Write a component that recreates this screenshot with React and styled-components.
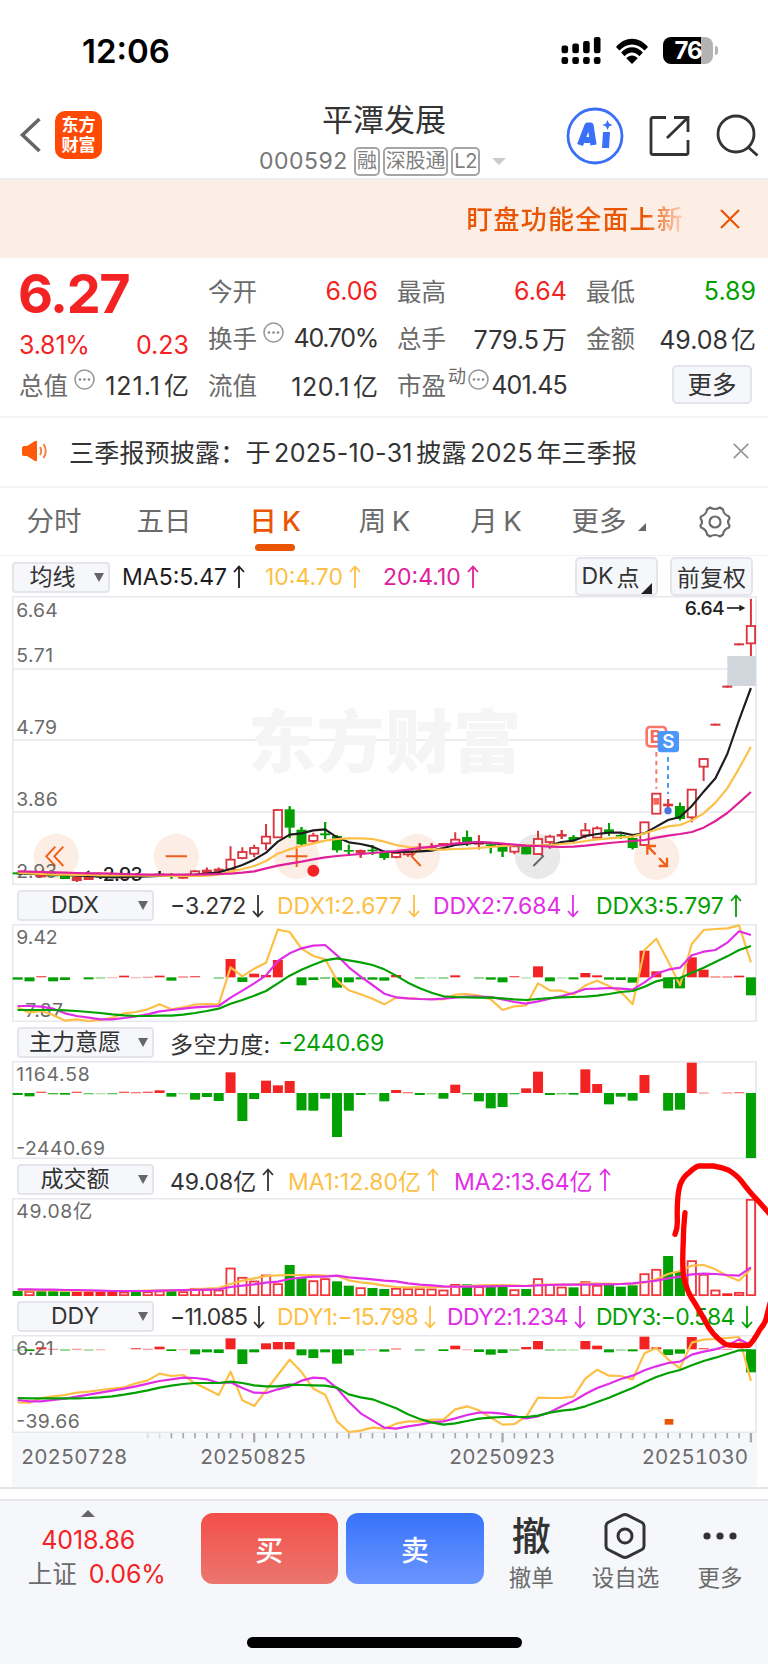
import React from "react";
import styled, { createGlobalStyle } from "styled-components";

const RED = "#f32323";
const GREEN = "#02a002";
const CANDLE = "#d9363e";
const YELLOW = "#fdbf45";
const PURPLE = "#e02ee6";
const PINK = "#e0209a";
const ORANGE = "#ea5504";

const GlobalStyle = createGlobalStyle`
  * {
    box-sizing: border-box;
  }

  body {
    margin: 0;
    background: #fff;
    font-family: Inter, "Noto Sans CJK SC", sans-serif;
    color: #333;
  }

  svg {
    display: block;
    flex-shrink: 0;
  }
`;

const Page = styled.div`
  position: relative;
  width: 768px;
  height: 1664px;
  display: flex;
  flex-direction: column;
  overflow: hidden;
  background: #fff;
  white-space: nowrap;
`;

const StatusBar = styled.div`
  height: 95px;
  padding: 31px 55px 0 82px;
  display: flex;
  align-items: flex-start;
  justify-content: space-between;
  color: #000;
`;

const Clock = styled.div`
  font-size: 33px;
  font-weight: 600;
  line-height: 41px;
  letter-spacing: 0;
`;

const StatusIcons = styled.div`
  display: flex;
  align-items: center;
  gap: 14px;
  padding-top: 6px;
`;

const Battery = styled.div`
  position: relative;
  width: 50px;
  height: 27px;
  border-radius: 8px;
  background: linear-gradient(to right, #000 76%, #b3b3b3 76%);
  color: #fff;
  font-size: 24px;
  font-weight: 700;
  line-height: 28px;
  text-align: center;
  letter-spacing: -1px;

  &::after {
    content: "";
    position: absolute;
    right: -5px;
    top: 9px;
    width: 3px;
    height: 9px;
    border-radius: 0 3px 3px 0;
    background: #b3b3b3;
  }
`;

const Header = styled.header`
  height: 85px;
  padding: 0 9px 0 19px;
  display: grid;
  grid-template-columns: 240px 250px 1fr;
  border-bottom: 2px solid #eeeeee;
`;

const HeaderLeft = styled.div`
  display: flex;
  align-items: center;
  gap: 13px;
  padding-bottom: 3px;
`;

const Logo = styled.div`
  width: 47px;
  height: 48px;
  border-radius: 10px;
  background: #ff4a05;
  color: #fff;
  font-size: 17px;
  font-weight: 700;
  line-height: 20px;
  text-align: center;
  padding-top: 4px;
`;

const TitleBlock = styled.div`
  display: flex;
  flex-direction: column;
`;

const Title = styled.h1`
  margin: 5px 0 0 63px;
  font-size: 31px;
  font-weight: 400;
  line-height: 40px;
  color: #333;
`;

const CodeRow = styled.div`
  display: flex;
  align-items: center;
  height: 30px;
  margin-top: 6px;
  font-size: 23px;
  color: #777;
`;

const Code = styled.span`
  width: 95px;
  flex-shrink: 0;
  letter-spacing: 0.5px;
`;

const Tag = styled.span`
  height: 29px;
  padding: 0 1px;
  margin-right: 3px;
  border: 2px solid #a5a5a5;
  border-radius: 5px;
  font-size: 20px;
  line-height: 24px;
  letter-spacing: -0.2px;
  color: #808080;
`;

const Triangle = styled.i`
  width: 0;
  height: 0;
  margin-left: ${(p) => p.$left || 0}px;
  border-left: ${(p) => p.$size}px solid transparent;
  border-right: ${(p) => p.$size}px solid transparent;
  border-top: ${(p) => p.$height}px solid ${(p) => p.$color};
`;

const HeaderRight = styled.div`
  display: flex;
  align-items: center;
  justify-content: flex-end;
  padding-bottom: 2px;
`;

const Banner = styled.div`
  height: 78px;
  padding: 0 28px 0 0;
  display: flex;
  align-items: center;
  justify-content: flex-end;
  background: #fdeee5;
`;

const BannerText = styled.span`
  font-size: 26px;
  font-weight: 500;
  letter-spacing: 1.2px;
  color: ${ORANGE};
  margin: 0 36px 3px 0;
  mask-image: linear-gradient(to right, #000 82%, rgba(0, 0, 0, 0.15));
`;

const Quote = styled.section`
  height: 160px;
  padding: 9px 12px 0 19px;
  display: grid;
  grid-template-columns: repeat(4, 170px);
  column-gap: 19px;
  border-bottom: 2px solid #f4f4f5;
`;

const QuoteColumn = styled.div`
  display: flex;
  flex-direction: column;
`;

const Price = styled.div`
  height: 55px;
  margin-left: -1px;
  font-size: 54px;
  font-weight: 700;
  line-height: 53px;
  letter-spacing: -1.4px;
  color: ${RED};
`;

const Cell = styled.div`
  height: ${(p) => p.$height || 47}px;
  display: flex;
  align-items: center;
  justify-content: space-between;
  font-size: 24.5px;
  color: #6b6b6b;
`;

const Label = styled.span`
  display: flex;
  align-items: center;
  gap: 6px;
`;

const Sup = styled.sup`
  font-size: 18px;
  line-height: 18px;
  margin: -15px -4px 0 -4px;
`;

const Value = styled.span`
  font-size: 25px;
  letter-spacing: ${(p) => p.$spacing ?? 0}px;
  color: ${(p) => p.$color || "#333"};
`;

const Unit = styled.span`
  margin-left: 3px;
  letter-spacing: 0;
`;

const MoreButton = styled.button`
  width: 80px;
  height: 39px;
  margin: 0 4px 0 auto;
  padding: 0;
  border: 2px solid #e3e5ea;
  border-radius: 5px;
  background: #f6f7fa;
  font: inherit;
  font-size: 24.5px;
  line-height: 32px;
  color: #333;
`;

const Notice = styled.div`
  height: 70px;
  padding: 0 19px 2px 21px;
  display: flex;
  align-items: center;
  border-bottom: 2px solid #f4f4f5;
  font-size: 25px;
`;

const NoticeText = styled.span`
  flex: 1;
  margin-left: 20px;
  letter-spacing: 0.2px;
`;

const Num = styled.span`
  margin: 0 3.5px;
  letter-spacing: 0.3px;
`;

const Tabs = styled.nav`
  height: 68px;
  display: flex;
  border-bottom: 1px solid #f2f2f3;
`;

const Tab = styled.div`
  position: relative;
  width: ${(p) => p.$width}px;
  padding-top: 13px;
  text-align: center;
  font-size: 27.5px;
  line-height: 40px;
  word-spacing: -2px;
  color: ${(p) => (p.$active ? ORANGE : "#6b6b6b")};
  font-weight: ${(p) => (p.$active ? 500 : 400)};

  &::after {
    content: "";
    display: ${(p) => (p.$active ? "block" : "none")};
    width: 40px;
    height: 7px;
    margin: 3px auto 0;
    border-radius: 4px;
    background: ${ORANGE};
  }
`;

const Corner = styled.i`
  display: inline-block;
  border-left: ${(p) => p.$size}px solid transparent;
  border-bottom: ${(p) => p.$size}px solid ${(p) => p.$color};
  margin-left: ${(p) => p.$left}px;
  align-self: flex-end;
`;

const TabIcon = styled.div`
  display: flex;
  align-items: center;
  padding-left: 34px;
`;

const Toolbar = styled.div`
  height: ${(p) => p.$height || 39}px;
  padding: 2px 15px 0 ${(p) => p.$left || 17}px;
  display: flex;
  align-items: center;
  font-size: 23px;
`;

const Select = styled.div`
  position: relative;
  width: ${(p) => p.$width || 137}px;
  height: 31px;
  flex-shrink: 0;
  margin-right: ${(p) => p.$gap || 16}px;
  padding-right: ${(p) => (p.$width ? 17 : 21)}px;
  border: 2px solid #e3e5ea;
  border-radius: 4px;
  background: #f6f7fa;
  text-align: center;
  line-height: 26px;

  ${Triangle} {
    position: absolute;
    right: 4px;
    top: 9px;
  }
`;

const LegendItem = styled.div`
  display: flex;
  flex-shrink: 0;
  align-items: center;
  gap: 6px;
  width: ${(p) => p.$width}px;
  color: ${(p) => p.$color || "#333"};
  letter-spacing: ${(p) => p.$spacing || 0}px;
`;

const ToolButton = styled.div`
  width: 83px;
  height: 39px;
  margin: -2px 0 0 ${(p) => p.$left || 0}px;
  display: flex;
  align-items: center;
  justify-content: center;
  border: 2px solid #e3e5ea;
  border-radius: 5px;
  background: #f6f7fa;
`;

const Spacer = styled.div`
  flex: 1;
`;

const ChartSvg = styled.svg`
  margin-left: 12px;
  width: 745px;
  height: ${(p) => p.$height}px;
`;

const AxisText = styled.text`
  font-size: 58px;
  fill: ${(p) => p.$color || "#6b6b6b"};
  font-weight: ${(p) => p.$weight || 400};
`;

const Axis = styled.div`
  height: 54px;
  margin: 0 11px 0 12px;
  background: #f6f7fb;
`;

const Dates = styled.div`
  display: grid;
  grid-template-columns: 179px 249px 1fr auto;
  padding: 0 9px;
  margin-top: 1px;
  font-size: 20.5px;
  line-height: 26px;
  color: #6b6b6b;
  font-variant-numeric: tabular-nums;
  letter-spacing: 0;
`;

const Divider = styled.div`
  height: 14px;
  border-top: 2px solid #e4e5e9;
  border-bottom: 2px solid #e8e8ea;
`;

const Footer = styled.footer`
  flex: 1;
  display: flex;
  flex-direction: column;
  align-items: center;
  background: #f6f7fa;
`;

const FooterRow = styled.div`
  width: 100%;
  height: 136px;
  display: flex;
  padding-top: 12px;
`;

const IndexBox = styled.div`
  width: 193px;
  padding: 9px 16px 0 0;
  margin-top: -12px;
  display: flex;
  flex-direction: column;
  align-items: center;
  font-size: 25px;
  line-height: 34px;
  letter-spacing: -0.1px;
  color: ${RED};
`;

const IndexChange = styled.div`
  margin-left: 17px;
`;

const IndexName = styled.span`
  margin-right: 12px;
  font-size: 24.5px;
  letter-spacing: 0;
  color: #6b6b6b;
`;

const UpTriangle = styled.i`
  border-left: 7px solid transparent;
  border-right: 7px solid transparent;
  border-bottom: 7px solid #666;
  margin-bottom: 6px;
`;

const TradeButton = styled.button`
  width: 138px;
  height: 71px;
  margin: 0 0 0 8px;
  border: 0;
  border-radius: 12px;
  background: linear-gradient(${(p) => p.$from}, ${(p) => p.$to});
  color: #fff;
  font: inherit;
  font-size: 28px;
  font-weight: 500;
`;

const FooterItem = styled.div`
  width: ${(p) => p.$width}px;
  display: flex;
  flex-direction: column;
  align-items: center;
  font-size: 22.5px;
  line-height: 30px;
  color: #6b6b6b;
`;

const FooterIcon = styled.div`
  height: 50px;
  display: flex;
  align-items: center;
  font-size: 39px;
  font-weight: 500;
  color: #333;
  padding-bottom: 5px;
`;

const HomeIndicator = styled.div`
  width: 275px;
  height: 11px;
  border-radius: 6px;
  background: #000;
`;

const Scribble = styled.svg`
  position: absolute;
  left: 660px;
  top: 1150px;
  width: 108px;
  height: 210px;
`;

// Charts are drawn at three units per pixel, one slot for each trading day.
const dayX = (i) => 53 + i * 35.48;
const BAR = 30;

// [kind, body top, body bottom, wick top, wick bottom]
// h: hollow red, r: solid red, g: solid green, k: black
const candles = [
  ["g", 457, 463], ["g", 458, 464], ["r", 463, 472], ["g", 465, 469],
  ["g", 465, 477], ["r", 470, 483, 470, 486], ["r", 471, 480], ["k", 470, 472, 463, 477],
  ["g", 470, 474], ["r", 468, 475], ["r", 466, 471], ["g", 465, 468],
  ["k", 461, 463, 453, 466], ["g", 464, 470, 460, 476], ["r", 466, 476], ["h", 454, 465, 450, 467],
  ["r", 449, 459, 443, 461], ["r", 446, 455, 443, 457], ["h", 419, 448, 379, 450],
  ["h", 396, 414, 382, 418], ["h", 384, 401, 374, 412], ["h", 350, 370, 312, 390],
  ["h", 270, 352], ["g", 268, 323, 259, 354], ["g", 329, 373, 321, 376],
  ["h", 347, 363, 338, 370], ["g", 340, 346, 306, 357], ["g", 348, 391, 346, 397],
  ["g", 390, 395, 374, 407], ["r", 390, 400, 389, 413], ["g", 389, 394, 376, 404],
  ["g", 396, 414, 393, 419], ["h", 399, 411, 395, 415], ["h", 396, 403, 388, 410],
  ["r", 380, 386, 370, 392], ["r", 379, 384, 370, 388], ["r", 369, 379],
  ["h", 359, 371, 337, 374], ["g", 351, 366, 332, 378], ["r", 368, 374, 346, 388],
  ["g", 373, 378, 371, 400], ["g", 377, 395, 375, 411], ["h", 379, 395, 377, 403],
  ["g", 381, 403], ["h", 357, 402, 332, 404], ["h", 350, 366, 344, 386],
  ["r", 342, 350, 330, 357], ["g", 351, 360, 346, 364], ["h", 331, 346, 309, 355],
  ["h", 325, 353, 319, 355], ["g", 328, 339, 309, 347], ["g", 345, 350, 342, 356],
  ["g", 354, 384, 352, 388], ["h", 307, 375, 305, 378], ["h", 221, 281],
  ["r", 251, 259, 237, 264], ["g", 258, 297, 248, 301], ["h", 209, 292, 209, 307],
  ["h", 117, 140, 117, 183], ["r", 11, 17], ["r", -103, -97], ["r", -230, -224],
  ["h", -282, -230, -364, -192],
];

const ma5 = [
  460, 461, 462, 464, 465, 467, 468, 470, 472, 471, 470, 469, 468, 467, 465, 464, 461, 457, 447, 435, 419,
  398, 365, 344, 340, 331, 328, 352, 367, 372, 380, 395, 396, 395, 394, 392, 384, 375, 371, 367, 369, 373,
  376, 378, 378, 376, 366, 362, 348, 342, 338, 338, 345, 340, 320, 300, 291, 258, 215, 175, 102, 0, -96,
];
const ma10 = [
  458, 460, 462, 464, 464, 465, 465, 466, 466, 466, 466, 467, 467, 468, 468, 468, 467, 464, 455, 447, 438,
  423, 401, 388, 378, 370, 362, 357, 355, 355, 357, 365, 375, 381, 384, 388, 389, 387, 386, 384, 381, 378,
  376, 376, 376, 375, 372, 369, 363, 358, 355, 352, 350, 340, 329, 319, 315, 301, 280, 248, 205, 145, 80,
];
const ma20 = [
  454, 455, 456, 457, 458, 459, 460, 460, 461, 462, 463, 464, 464, 464, 464, 464, 463, 462, 461, 458, 454,
  445, 437, 431, 425, 418, 412, 408, 405, 402, 399, 396, 393, 389, 384, 380, 375, 371, 368, 366, 368, 371,
  374, 377, 378, 380, 381, 380, 377, 373, 369, 366, 363, 360, 353, 347, 342, 336, 323, 303, 279, 248, 216,
];

const ddxBars = [
  -7, -12, 4, -12, -8, 0, -6, -2, 1, 5, 1, 2, 5, -10, 3, 4, 0, -3, 55, -14, 11, 7, 52, 0, -24, -8, -4, -31,
  -15, -6, -7, -10, 7, 0, -3, -1, -3, 6, 0, -3, -7, -15, 4, -1, 33, -12, -1, -6, 13, 6, -7, -8, -16, 80, 18,
  -33, -33, 60, 23, 3, 3, 5, -54,
];
const ddx1 = [
  352, 368, 363, 375, 392, 388, 393, 390, 383, 370, 366, 358, 343, 358, 352, 344, 342, 343, 232, 259, 236,
  218, 119, 126, 176, 198, 208, 271, 301, 313, 326, 343, 323, 325, 327, 327, 328, 314, 312, 317, 328, 360,
  349, 346, 280, 301, 302, 314, 286, 272, 288, 306, 343, 180, 146, 214, 286, 162, 120, 117, 115, 106, 217,
];
const ddx2 = [
  348, 348, 350, 356, 370, 378, 383, 388, 388, 384, 379, 373, 364, 360, 356, 352, 350, 348, 323, 302, 280,
  256, 213, 190, 175, 167, 165, 196, 232, 260, 285, 311, 322, 325, 327, 328, 326, 323, 320, 320, 321, 328,
  336, 341, 334, 326, 318, 309, 297, 296, 294, 296, 299, 277, 251, 239, 233, 196, 185, 180, 158, 124, 135,
];
const ddx3 = [
  360, 360, 360, 360, 361, 363, 366, 369, 373, 376, 378, 378, 377, 377, 374, 369, 363, 356, 341, 330, 317,
  303, 280, 257, 239, 224, 211, 205, 211, 217, 225, 238, 257, 278, 295, 308, 319, 321, 322, 323, 323, 325,
  328, 330, 327, 324, 322, 321, 320, 317, 312, 306, 303, 290, 274, 266, 264, 248, 233, 216, 199, 180, 168,
];

const willBars = [
  -6, -10, 4, -4, -5, 4, -3, -1, -3, 4, 3, 4, 8, -11, -1, -20, -12, -24, 62, -84, -18, 37, 23, 36, -52, -53,
  -17, -132, -53, -6, -2, -25, 9, 3, -6, -2, -17, 25, -4, -25, -46, -42, -4, 14, 64, -6, -3, -5, 71, 27, -34,
  -11, -23, 54, 0, -53, -50, 91, 2, 0, 2, 3, -195,
];

const volumes = (
  "g15 h15 g15 g16 g13 r13 r13 r13 r13 h13 g14 h14 h16 g16 h14 h24 h21 h19 h85 h57 h46 h64 h38 g93 g54 h47 " +
  "h53 g44 g31 h26 g24 g21 h24 h23 h23 h22 h19 h36 g35 h29 g29 g29 h20 g21 h53 h36 h28 g26 h44 h33 g33 g28 " +
  "g32 h68 h81 g120 g72 h107 h66 h19 r8 h12 h291"
).split(" ");
const vol1 = [
  390, 391, 391, 391, 392, 392, 393, 393, 393, 393, 393, 392, 392, 391, 390, 388, 386, 384, 372, 362, 355,
  348, 346, 345, 345, 345, 347, 348, 361, 367, 371, 377, 381, 382, 382, 382, 381, 380, 378, 376, 375, 375,
  376, 378, 374, 374, 374, 374, 370, 371, 371, 372, 371, 368, 357, 342, 333, 317, 315, 328, 348, 362, 326,
];
const vol2 = [
  388, 388, 389, 389, 390, 390, 391, 392, 393, 393, 393, 393, 392, 391, 390, 390, 389, 388, 381, 377, 373,
  368, 365, 357, 353, 350, 350, 347, 352, 355, 358, 362, 364, 370, 374, 376, 379, 380, 380, 379, 379, 378,
  378, 378, 376, 375, 374, 374, 374, 373, 373, 372, 370, 366, 362, 355, 350, 343, 341, 342, 345, 347, 322,
];

const ddyBars = [
  -1, -5, 6, 2, -3, 2, -2, 1, 0, 0, 4, 2, 8, -5, 1, -15, -9, -11, 33, -44, -9, 18, 22, 22, -18, -26, -9, -43,
  -18, -3, 1, -7, 3, 0, -4, 0, -5, 11, 1, -8, -16, -11, -3, 7, 25, -3, -2, -1, 25, 11, -9, -2, -6, 38, 6,
  -17, -13, 37, 4, 2, 2, 0, -69,
];
const ddy1 = [
  727, 728, 714, 709, 705, 698, 695, 690, 686, 682, 670, 661, 641, 648, 645, 670, 687, 705, 635, 721, 738,
  691, 645, 599, 636, 686, 704, 784, 816, 812, 803, 806, 791, 784, 784, 779, 779, 748, 739, 751, 773, 794,
  792, 770, 713, 714, 714, 710, 656, 629, 647, 648, 658, 580, 564, 598, 625, 548, 539, 537, 534, 531, 663,
];
const ddy2 = [
  720, 724, 724, 720, 716, 710, 704, 698, 692, 686, 679, 671, 663, 658, 653, 654, 658, 669, 667, 684, 698,
  699, 688, 679, 662, 653, 655, 685, 725, 760, 781, 803, 806, 799, 794, 787, 784, 775, 765, 758, 758, 761,
  768, 775, 769, 757, 739, 723, 702, 684, 671, 657, 647, 631, 619, 609, 605, 584, 575, 568, 557, 538, 556,
];
const ddy3 = [
  714, 715, 715, 715, 715, 715, 714, 712, 709, 704, 698, 691, 683, 677, 672, 669, 669, 669, 665, 669, 676,
  679, 679, 674, 675, 676, 677, 683, 703, 712, 718, 731, 745, 763, 777, 787, 794, 790, 783, 776, 773, 771,
  771, 771, 767, 758, 752, 748, 739, 726, 713, 698, 684, 667, 651, 639, 630, 616, 603, 593, 582, 571, 571,
];

const Line = ({ data, color }) => (
  <polyline
    points={data.map((y, i) => `${dayX(i)},${y}`).join(" ")}
    fill="none"
    stroke={color}
    strokeWidth="6.5"
    strokeLinejoin="round"
  />
);

const Bars = ({ data, zero }) =>
  data.map((v, i) => {
    const h = Math.abs(v);
    if (!h) return null;
    return (
      <rect
        key={i}
        x={dayX(i) - BAR / 2}
        y={v > 0 ? zero - h : zero}
        width={BAR}
        height={Math.max(h, 4)}
        fill={v > 0 ? RED : GREEN}
        opacity={h < 5 ? 0.15 + h * 0.15 : 1}
      />
    );
  });

const Candle = ({ x, kind, top, bottom, high = top, low = bottom }) => {
  const color = { h: CANDLE, r: CANDLE, g: GREEN, k: "#222" }[kind];
  const hollow = kind === "h";
  return (
    <g stroke={color} strokeWidth="6">
      <path d={`M${x} ${high}V${top}M${x} ${bottom}V${low}`} />
      <rect
        x={x - (hollow ? 12.5 : 15)}
        y={top}
        width={hollow ? 25 : 30}
        height={bottom - top}
        strokeWidth={hollow ? 5.5 : 0}
        fill={hollow ? "#fff" : color}
      />
      {!hollow && high < low && <path d={`M${x} ${high}V${low}`} />}
    </g>
  );
};

const Panel = ({ top, height, children }) => (
  <ChartSvg $height={height} viewBox={`36 ${top} 2235 ${height * 3}`}>
    <rect x="38" y={top + 2} width="2230" height={height * 3 - 4} fill="#fff" stroke="#e6e8ee" strokeWidth="5" />
    {children}
  </ChartSvg>
);

const Arrow = ({ down }) => (
  <svg width="12" height="24" viewBox="0 0 12 24" fill="none" stroke="currentColor" strokeWidth="1.8">
    <path d={down ? "M6 1V22M1 17L6 22.5L11 17" : "M6 23V2M1 7L6 1.5L11 7"} />
  </svg>
);

const Legend = ({ items }) =>
  items.map(([text, color, dir, width, spacing]) => (
    <LegendItem key={text} $color={color} $width={width} $spacing={spacing}>
      {text}
      {dir && <Arrow down={dir === "down"} />}
    </LegendItem>
  ));

const Dropdown = ({ label, width, gap }) => (
  <Select $width={width} $gap={gap}>
    {label}
    <Triangle $size={5} $height={9} $color="#666" />
  </Select>
);

const Info = () => (
  <svg width="21" height="21" viewBox="0 0 21 21" style={{ marginTop: -10 }}>
    <circle cx="10.5" cy="10.5" r="9.5" fill="none" stroke="#999" strokeWidth="1.6" />
    <g fill="#888">
      <circle cx="6" cy="10.5" r="1.3" />
      <circle cx="10.5" cy="10.5" r="1.3" />
      <circle cx="15" cy="10.5" r="1.3" />
    </g>
  </svg>
);

const Close = ({ size, color }) => (
  <svg width={size} height={size} viewBox="0 0 20 20" stroke={color} strokeWidth="2.2">
    <path d="M1 1L19 19M19 1L1 19" />
  </svg>
);

const Signal = () => (
  <svg width="40" height="27" viewBox="0 0 40 27">
    {[8.5, 6.5, 4, 0].map((y, i) => (
      <g key={y}>
        <rect x={0.5 + i * 10.8} y={y} width="6.6" height={16.3 - y} rx="2.2" />
        <rect x={0.5 + i * 10.8} y="20" width="6.6" height="7" rx="2.2" />
      </g>
    ))}
  </svg>
);

const Wifi = () => (
  <svg width="34" height="26" viewBox="0 0 34 26">
    <path d="M1 9C10-2 24-2 33 9L29.6 12.600C22 4.600 12 4.600 4.400 12.600Z" />
    <path d="M6.100 14.600C12.500 7.400 21.500 7.400 27.900 14.600L24.400 18.200C20 13.300 14 13.300 9.600 18.200Z" />
    <path d="M11.300 20.200C14.700 16.600 19.300 16.600 22.700 20.200L17 26Z" />
  </svg>
);

const PriceChart = () => (
  <Panel top={-372} height={289}>
    <path d="M38 -153H2268M38 60H2268M38 276H2268" stroke="#e6e8ee" strokeWidth="5" />
    <text x="744" y="140" fontSize="204" fontWeight="900" fill="#f5f5f5" textLength="820">
      东方财富
    </text>
    <rect x="2182" y="-192" width="86" height="90" fill="#d1d6dc" />
    <AxisText x="49" y="-309" textLength="124">6.64</AxisText>
    <AxisText x="49" y="-174" textLength="110">5.71</AxisText>
    <AxisText x="49" y="42" textLength="122">4.79</AxisText>
    <AxisText x="49" y="258" textLength="124">3.86</AxisText>
    {[169, 529, 890, 1252, 1613, 1970].map((x, i) => (
      <circle key={x} cx={x} cy={i === 5 ? 412 : 409} r="68" fill={i === 4 ? "#e9e9ea" : "#fdeee5"} />
    ))}
    <g fill="none" stroke="#f0601c" strokeWidth="6">
      <path d="M166 380L139 409L166 438M190 380L163 409L190 438" />
      <path d="M497 409H561M858 409H922M890 377V441" />
      <path d="M1262 380L1235 409L1262 438" />
    </g>
    <path d="M1600 438L1629 409L1600 380" fill="none" stroke="#666" strokeWidth="6" />
    <AxisText x="49" y="473" textLength="122">2.93</AxisText>
    <path d="M300 461H256M268 453L256 461L268 469" fill="none" stroke="#333" strokeWidth="5" />
    <AxisText x="308" y="482" textLength="120" $color="#222" $weight="500">2.93</AxisText>
    {candles.map(([kind, top, bottom, high, low], i) => (
      <Candle key={i} x={dayX(i)} kind={kind} top={top} bottom={bottom} high={high} low={low} />
    ))}
    <Line data={ma5} color="#1d1d1f" />
    <Line data={ma10} color={YELLOW} />
    <Line data={ma20} color={PINK} />
    <path
      d="M1967 403L1943 379M1942 404V378H1968M1977 414L2000 438M2001 413V438H1976"
      fill="none"
      stroke="#f0601c"
      strokeWidth="7"
    />
    <circle cx="940" cy="452" r="18" fill={RED} />
    <path d="M1969 96V206" stroke="#f77a70" strokeWidth="6" strokeDasharray="14 12" />
    <path d="M2004 111V222" stroke="#4f97f5" strokeWidth="6" strokeDasharray="14 12" />
    <rect x="1960" y="234" width="18" height="20" fill="#f9675b" />
    <circle cx="2004" cy="272" r="11" fill="#4678e0" />
    <rect x="1940" y="21" width="58" height="58" rx="10" fill="#fff" stroke="#f9766b" strokeWidth="8" />
    <text x="1967" y="69" textAnchor="middle" fontSize="54" fontWeight="700" fill="#f9675b">B</text>
    <rect x="1973" y="33" width="64" height="64" rx="10" fill="#4c97fb" />
    <text x="2005" y="85" textAnchor="middle" fontSize="56" fontWeight="600" fill="#fff">S</text>
    <AxisText x="2054" y="-314" textLength="120" $color="#222" $weight="500">6.64</AxisText>
    <path d="M2181 -336H2228" stroke="#222" strokeWidth="5" />
    <path d="M2218 -346L2236 -336L2218 -326Z" fill="#222" />
  </Panel>
);

export default () => (
  <Page>
    <GlobalStyle />
    <StatusBar>
      <Clock>12:06</Clock>
      <StatusIcons>
        <Signal />
        <Wifi />
        <Battery>76</Battery>
      </StatusIcons>
    </StatusBar>

    <Header>
      <HeaderLeft>
        <svg width="23" height="36" viewBox="0 0 23 36" fill="none" stroke="#666" strokeWidth="3.600">
          <path d="M20.500 2L3.500 18L20.500 34" />
        </svg>
        <Logo>
          东方
          <br />
          财富
        </Logo>
      </HeaderLeft>
      <TitleBlock>
        <Title>平潭发展</Title>
        <CodeRow>
          <Code>000592</Code>
          <Tag>融</Tag>
          <Tag>深股通</Tag>
          <Tag>L2</Tag>
          <Triangle $left={9} $size={7} $height={7} $color="#ccc" />
        </CodeRow>
      </TitleBlock>
      <HeaderRight>
        <svg width="58" height="58" viewBox="0 0 58 58">
          <circle cx="29" cy="29" r="27" fill="none" stroke="#3a6ff7" strokeWidth="2.800" />
          <path
            d="M14 38L21.500 18.500H24.500L27.500 38M18 33H26"
            fill="none"
            stroke="#3a6ff7"
            strokeWidth="6.200"
            strokeLinejoin="round"
          />
          <path d="M37 25H44L43 41H36Z" fill="#3a6ff7" />
          <path d="M41.500 13L43 16.500L46.500 18L43 19.500L41.500 23L40 19.500L36.500 18L40 16.500Z" fill="#3a6ff7" />
        </svg>
        <svg width="44" height="44" viewBox="0 0 44 44" fill="none" stroke="#333" strokeWidth="2.800" style={{ marginLeft: 24 }}>
          <path d="M18 3.500H5Q3 3.500 3 5.500V38.500Q3 40.500 5 40.500H38Q40 40.500 40 38.500V26" />
          <path d="M26 3.500H40V18M40 3.500L19 24" />
        </svg>
        <svg width="44" height="44" viewBox="0 0 44 44" fill="none" stroke="#333" strokeWidth="2.800" style={{ marginLeft: 23 }}>
          <circle cx="21" cy="20" r="18" />
          <path d="M33 33L42.500 41.500" />
        </svg>
      </HeaderRight>
    </Header>

    <Banner>
      <BannerText>盯盘功能全面上新</BannerText>
      <Close size={20} color={ORANGE} />
    </Banner>

    <Quote>
      <QuoteColumn>
        <Price>6.27</Price>
        <Cell $height={46}>
          <Value $color={RED} $spacing={-0.2}>3.81%</Value>
          <Value $color={RED}>0.23</Value>
        </Cell>
        <Cell $height={32}>
          <Label>总值<Info /></Label>
          <Value $spacing={1}>121.1<Unit>亿</Unit></Value>
        </Cell>
      </QuoteColumn>
      <QuoteColumn>
        <Cell>今开<Value $color={RED}>6.06</Value></Cell>
        <Cell>
          <Label>换手<Info /></Label>
          <Value $spacing={-1.3}>40.70%</Value>
        </Cell>
        <Cell>流值<Value $spacing={0.6}>120.1<Unit>亿</Unit></Value></Cell>
      </QuoteColumn>
      <QuoteColumn>
        <Cell>最高<Value $color={RED}>6.64</Value></Cell>
        <Cell>总手<Value>779.5<Unit>万</Unit></Value></Cell>
        <Cell>
          <Label>市盈<Sup>动</Sup><Info /></Label>
          <Value $spacing={-0.8}>401.45</Value>
        </Cell>
      </QuoteColumn>
      <QuoteColumn>
        <Cell>最低<Value $color={GREEN}>5.89</Value></Cell>
        <Cell>金额<Value>49.08<Unit>亿</Unit></Value></Cell>
        <Cell><MoreButton>更多</MoreButton></Cell>
      </QuoteColumn>
    </Quote>

    <Notice>
      <svg width="28" height="24" viewBox="0 0 28 24">
        <path d="M1 9Q1 7 3 7H6L14 2Q16 1 16 3V21Q16 23 14 22L6 17H3Q1 17 1 15Z" fill="#ff5a0a" />
        <path d="M19 8Q21.500 12 19 16M22.500 5Q27 12 22.500 19" fill="none" stroke="#ff7a3a" strokeWidth="1.900" />
      </svg>
      <NoticeText>
        三季报预披露：于<Num>2025-10-31</Num>披露<Num>2025</Num>年三季报
      </NoticeText>
      <Close size={16} color="#999" />
    </Notice>

    <Tabs>
      <Tab $width={108}>分时</Tab>
      <Tab $width={112}>五日</Tab>
      <Tab $width={110} $active>日 K</Tab>
      <Tab $width={109}>周 K</Tab>
      <Tab $width={114}>月 K</Tab>
      <Tab $width={111}>
        更多
        <Corner $size={8} $left={11} $color="#666" />
      </Tab>
      <TabIcon>
        <svg width="34" height="34" viewBox="0 0 34 34" fill="none" stroke="#6b6b6b" strokeWidth="2.200" strokeLinejoin="round">
          <path d="M12 2.500Q17 5.500 22 2.500L25 4.500Q25.500 9.500 31 11.500L31.500 13.500Q28.500 17 31.500 20.500L31 22.500Q25.500 24.500 25 29.500L22 31.500Q17 28.500 12 31.500L9 29.500Q8.500 24.500 3 22.500L2.500 20.500Q5.500 17 2.500 13.500L3 11.500Q8.500 9.500 9 4.500Z" />
          <circle cx="17" cy="17" r="5.500" />
        </svg>
      </TabIcon>
    </Tabs>

    <Toolbar $height={40} $left={12}>
      <Dropdown label="均线" width={98} gap={12} />
      <Legend
        items={[
          ["MA5:5.47", "#1d1d1f", "up", 143],
          ["10:4.70", YELLOW, "up", 118],
          ["20:4.10", PINK, "up", 110],
        ]}
      />
      <Spacer />
      <ToolButton>
        DK<Unit>点</Unit>
        <Corner $size={11} $left={1} $color="#222" />
      </ToolButton>
      <ToolButton $left={12}>前复权</ToolButton>
    </Toolbar>
    <PriceChart />

    <Toolbar>
      <Dropdown label="DDX" />
      <Legend
        items={[
          ["−3.272", "#333", "down", 107],
          ["DDX1:2.677", YELLOW, "down", 156],
          ["DDX2:7.684", PURPLE, "down", 163],
          ["DDX3:5.797", GREEN, "up", 145],
        ]}
      />
    </Toolbar>
    <Panel top={102} height={98}>
      <Bars data={ddxBars} zero={262} />
      <AxisText x="49" y="162" textLength="124">9.42</AxisText>
      <AxisText x="49" y="382" textLength="140">-7.87</AxisText>
      <Line data={ddx1} color={YELLOW} />
      <Line data={ddx2} color={PURPLE} />
      <Line data={ddx3} color={GREEN} />
    </Panel>

    <Toolbar>
      <Dropdown label="主力意愿" />
      <Legend
        items={[
          ["多空力度:", "#333", null, 108, 0.4],
          ["−2440.69", GREEN, null, 120],
        ]}
      />
    </Toolbar>
    <Panel top={513} height={98}>
      <Bars data={willBars} zero={609} />
      <AxisText x="49" y="573" textLength="220">1164.58</AxisText>
      <AxisText x="49" y="794" textLength="266">-2440.69</AxisText>
    </Panel>

    <Toolbar>
      <Dropdown label="成交额" />
      <Legend
        items={[
          ["49.08亿", "#333", "up", 118],
          ["MA1:12.80亿", YELLOW, "up", 166],
          ["MA2:13.64亿", PURPLE, "up", 170],
        ]}
      />
    </Toolbar>
    <Panel top={114} height={98}>
      {volumes.map((v, i) => {
        const h = Number(v.slice(1));
        const hollow = v[0] === "h";
        return (
          <rect
            key={i}
            x={dayX(i) - (hollow ? 12.5 : 15)}
            y={hollow ? 408 - h + 2.5 : 408 - h}
            width={hollow ? 25 : 30}
            height={hollow ? h - 5 : h}
            fill={hollow ? "#fff" : v[0] === "g" ? GREEN : RED}
            stroke={hollow ? "#f0383c" : "none"}
            strokeWidth="5.5"
          />
        );
      })}
      <AxisText x="49" y="173" textLength="228">49.08亿</AxisText>
      <Line data={vol1} color={YELLOW} />
      <Line data={vol2} color={PURPLE} />
    </Panel>

    <Toolbar>
      <Dropdown label="DDY" />
      <Legend
        items={[
          ["−11.085", "#333", "down", 107, -0.8],
          ["DDY1:−15.798", YELLOW, "down", 170, -0.7],
          ["DDY2:1.234", PURPLE, "down", 149, -0.7],
          ["DDY3:−0.584", GREEN, "down", 155, -0.8],
        ]}
      />
    </Toolbar>
    <Panel top={525} height={98}>
      <Bars data={ddyBars} zero={568} />
      <AxisText x="49" y="584" textLength="112">6.21</AxisText>
      <AxisText x="49" y="805" textLength="190">-39.66</AxisText>
      <Line data={ddy1} color={YELLOW} />
      <Line data={ddy2} color={PURPLE} />
      <Line data={ddy3} color={GREEN} />
      <rect x="1994" y="777" width="26" height="17" fill={ORANGE} />
    </Panel>
    <Axis>
      <svg width="745" height="10" viewBox="36 0 2235 30">
        {Array.from({ length: 52 }, (_, n) => n + 11).map((i) => (
          <path
            key={i}
            d={`M${dayX(i)} 0V${i % 21 === 20 ? 28 : 16}`}
            stroke={i < 13 ? "#ddd" : "#a8a8a8"}
            strokeWidth={i % 21 === 20 ? 7 : 5}
          />
        ))}
      </svg>
      <Dates>
        <span>20250728</span>
        <span>20250825</span>
        <span>20250923</span>
        <span>20251030</span>
      </Dates>
    </Axis>
    <Divider />

    <Footer>
      <FooterRow>
        <IndexBox>
          <UpTriangle />
          <div>4018.86</div>
          <IndexChange>
            <IndexName>上证</IndexName>
            0.06%
          </IndexChange>
        </IndexBox>
        <TradeButton $from="#f44e49" $to="#eb766f">买</TradeButton>
        <TradeButton $from="#3873fa" $to="#6b95ff">卖</TradeButton>
        <FooterItem $width={95}>
          <FooterIcon>撤</FooterIcon>
          撤单
        </FooterItem>
        <FooterItem $width={94}>
          <FooterIcon>
            <svg width="42" height="46" viewBox="0 0 42 46" fill="none" stroke="#333" strokeWidth="3" strokeLinejoin="round">
              <path d="M18.500 2.200Q21 1 23.500 2.200L38 9.500Q40 10.700 40 13V33Q40 35.300 38 36.500L23.500 43.800Q21 45 18.500 43.800L4 36.500Q2 35.300 2 33V13Q2 10.700 4 9.500Z" />
              <circle cx="21" cy="23" r="7" />
            </svg>
          </FooterIcon>
          设自选
        </FooterItem>
        <FooterItem $width={96}>
          <FooterIcon>
            <svg width="34" height="8" viewBox="0 0 34 8" fill="#333">
              <circle cx="4" cy="4" r="3.600" />
              <circle cx="17" cy="4" r="3.600" />
              <circle cx="30" cy="4" r="3.600" />
            </svg>
          </FooterIcon>
          更多
        </FooterItem>
      </FooterRow>
      <HomeIndicator />
    </Footer>

    {/* hand-drawn mark round the last volume bars */}
    <Scribble viewBox="840 -30 324 630" fill="none" stroke="#fe0000" strokeWidth="16" strokeLinecap="round" strokeLinejoin="round">
      <path d="M885 223Q893 205 892 180Q890 110 900 75Q910 50 925 40Q945 20 957 18H1000Q1025 22 1045 30Q1070 45 1083 62Q1110 98 1130 118L1175 168" />
      <path d="M915 158Q910 210 910 240Q906 320 911 350Q920 395 945 430Q960 455 975 482Q995 525 1035 552Q1045 558 1107 556Q1120 545 1140 508Q1158 488 1161 465L1170 430" />
    </Scribble>
  </Page>
);
